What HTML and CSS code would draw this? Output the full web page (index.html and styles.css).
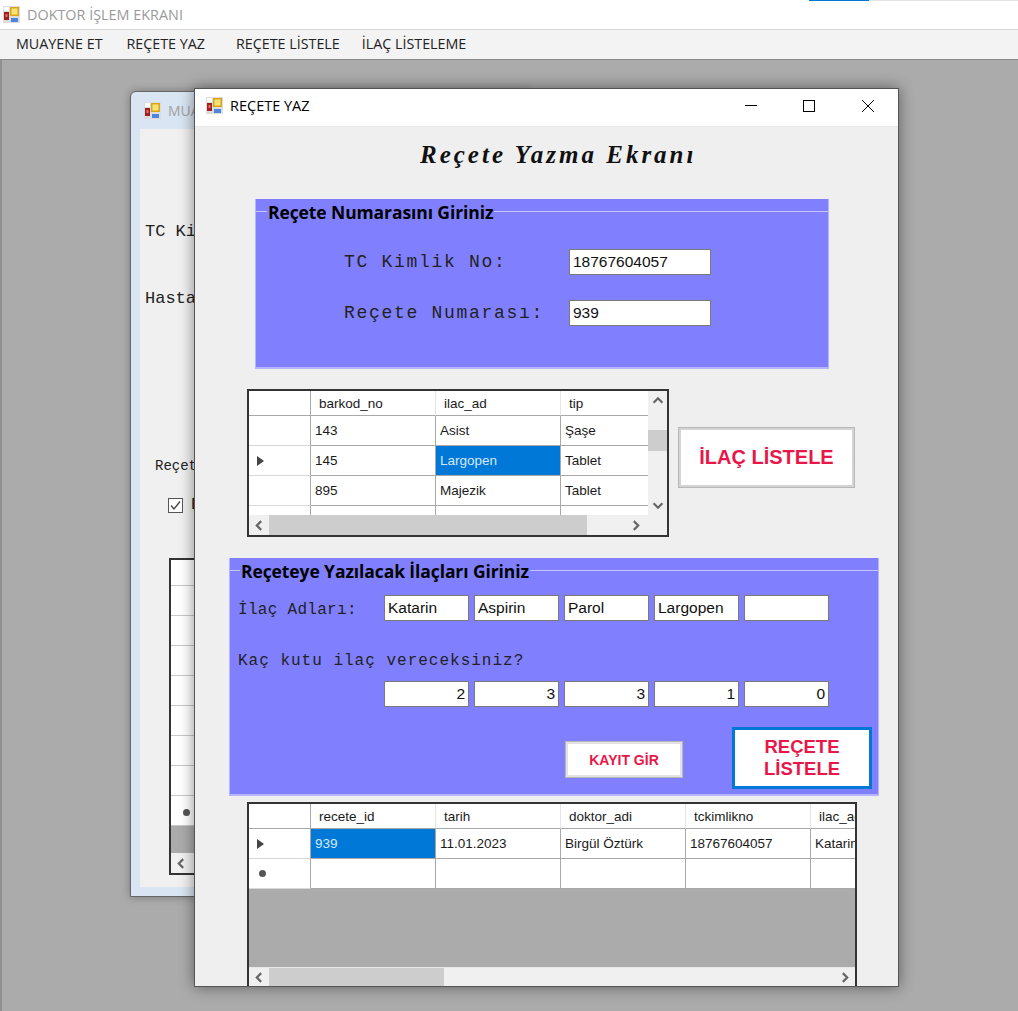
FILE: index.html
```html
<!DOCTYPE html>
<html lang="tr">
<head>
  <meta charset="UTF-8">
  <title>DOKTOR İŞLEM EKRANI</title>
  <link rel="stylesheet" href="styles.css">
</head>
<body>
  <svg class="defs" width="0" height="0">
    <symbol id="form-icon" viewBox="0 0 17 17">
      <rect x="0" y="0" width="17" height="17" fill="#dcdcdc"/>
      <rect x="1" y="1" width="5" height="4" fill="#fff"/>
      <rect x="1" y="6" width="5" height="8" fill="#9c2020"/>
      <rect x="2.5" y="8" width="2" height="3" fill="#f06a6a"/>
      <rect x="7" y="1" width="9" height="9" fill="#d9a514"/>
      <rect x="8.5" y="2.5" width="6" height="6" fill="#fbe27a"/>
      <rect x="8" y="12" width="7" height="4" fill="#4c86dc"/>
    </symbol>
    <symbol id="chev-left" viewBox="0 0 10 10"><path d="M7 1 L3 5 L7 9" fill="none" stroke="#666" stroke-width="2"/></symbol>
    <symbol id="chev-right" viewBox="0 0 10 10"><path d="M3 1 L7 5 L3 9" fill="none" stroke="#666" stroke-width="2"/></symbol>
    <symbol id="chev-up" viewBox="0 0 10 10"><path d="M1 7 L5 3 L9 7" fill="none" stroke="#666" stroke-width="2"/></symbol>
    <symbol id="chev-down" viewBox="0 0 10 10"><path d="M1 3 L5 7 L9 3" fill="none" stroke="#666" stroke-width="2"/></symbol>
  </svg>

  <!-- Ana pencere -->
  <header class="app-title">
    <svg class="form-icon"><use href="#form-icon"/></svg>
    <span>DOKTOR İŞLEM EKRANI</span>
    <div class="taskline"><i></i></div>
  </header>
  <nav class="menu">
    <a class="m1">MUAYENE ET</a>
    <a class="m2">REÇETE YAZ</a>
    <a class="m3">REÇETE LİSTELE</a>
    <a class="m4">İLAÇ LİSTELEME</a>
  </nav>

  <main class="mdi">
    <!-- Arkadaki muayene penceresi -->
    <section class="win win-back">
      <div class="back-title">
        <svg class="form-icon"><use href="#form-icon"/></svg>
        <span>MUA</span>
      </div>
      <div class="back-body">
        <p class="mono back-tc">TC Ki</p>
        <p class="mono back-hasta">Hasta</p>
        <p class="mono back-recete">Reçet</p>
        <div class="back-check">
          <svg class="checkbox" viewBox="0 0 15 15"><rect x="0.5" y="0.5" width="14" height="14" fill="#fff" stroke="#555"/><path d="M3 7.5 L6 11 L12 3.5" fill="none" stroke="#444" stroke-width="1.3"/></svg>
          <span class="mono">E</span>
        </div>
        <div class="back-grid">
          <div class="back-row back-head"></div>
          <div class="back-row"></div>
          <div class="back-row"></div>
          <div class="back-row"></div>
          <div class="back-row"></div>
          <div class="back-row"></div>
          <div class="back-row"></div>
          <div class="back-row"></div>
          <div class="back-row star-row"><span class="star"></span></div>
          <div class="back-empty"></div>
          <div class="back-scroll"><svg class="chev"><use href="#chev-left"/></svg></div>
        </div>
      </div>
    </section>

    <!-- Recete yazma penceresi -->
    <section class="win win-front">
      <div class="front-title">
        <svg class="form-icon"><use href="#form-icon"/></svg>
        <span class="front-name">REÇETE YAZ</span>
        <svg class="caption" viewBox="0 0 153 14">
          <path d="M0 6.5 H12" stroke="#000" fill="none"/>
          <rect x="58.5" y="1.5" width="11" height="11" stroke="#000" fill="none"/>
          <path d="M117 1 L129 13 M129 1 L117 13" stroke="#000" fill="none"/>
        </svg>
      </div>

      <div class="front-body">
        <h1 class="heading">Reçete Yazma Ekranı</h1>

        <fieldset class="group group-top">
          <legend>Reçete Numarasını Giriniz</legend>
          <div class="field field-tc">
            <label class="mono big">TC Kimlik No:</label>
            <div class="tb tb-wide">18767604057</div>
          </div>
          <div class="field">
            <label class="mono big">Reçete Numarası:</label>
            <div class="tb tb-wide">939</div>
          </div>
        </fieldset>

        <div class="grid-row">
          <div class="grid grid-ilac">
            <div class="grid-main">
              <div class="grid-clip">
                <table>
                  <thead>
                    <tr><th class="rh"></th><th>barkod_no</th><th>ilac_ad</th><th class="c-tip">tip</th></tr>
                  </thead>
                  <tbody>
                    <tr><td class="rh"></td><td>143</td><td>Asist</td><td>Şaşe</td></tr>
                    <tr><td class="rh"><span class="arrow"></span></td><td>145</td><td class="sel">Largopen</td><td>Tablet</td></tr>
                    <tr><td class="rh"></td><td>895</td><td>Majezik</td><td>Tablet</td></tr>
                    <tr><td class="rh"></td><td></td><td></td><td></td></tr>
                  </tbody>
                </table>
              </div>
              <div class="vscroll">
                <svg class="chev"><use href="#chev-up"/></svg>
                <div class="vtrack"><div class="vthumb"></div></div>
                <svg class="chev"><use href="#chev-down"/></svg>
              </div>
            </div>
            <div class="hscroll hscroll-ilac">
              <svg class="chev"><use href="#chev-left"/></svg>
              <div class="htrack"><div class="hthumb thumb-ilac"></div></div>
              <svg class="chev"><use href="#chev-right"/></svg>
            </div>
          </div>
          <button class="btn btn-ilac">İLAÇ LİSTELE</button>
        </div>

        <fieldset class="group group-ilac">
          <legend>Reçeteye Yazılacak İlaçları Giriniz</legend>
          <div class="names-row">
            <label class="mono mid">İlaç Adları:</label>
            <div class="tb-set">
              <div class="tb">Katarin</div>
              <div class="tb">Aspirin</div>
              <div class="tb">Parol</div>
              <div class="tb">Largopen</div>
              <div class="tb"></div>
            </div>
          </div>
          <p class="mono mid kac">Kaç kutu ilaç vereceksiniz?</p>
          <div class="tb-set tb-num">
            <div class="tb">2</div>
            <div class="tb">3</div>
            <div class="tb">3</div>
            <div class="tb">1</div>
            <div class="tb">0</div>
          </div>
          <div class="actions">
            <button class="btn btn-kayit">KAYIT GİR</button>
            <button class="btn btn-recete">REÇETE<br>LİSTELE</button>
          </div>
        </fieldset>

        <div class="grid grid-recete">
          <div class="grid-clip">
            <table>
              <thead>
                <tr><th class="rh"></th><th>recete_id</th><th>tarih</th><th>doktor_adi</th><th>tckimlikno</th><th>ilac_ad</th></tr>
              </thead>
              <tbody>
                <tr><td class="rh"><span class="arrow"></span></td><td class="sel">939</td><td>11.01.2023</td><td>Birgül Öztürk</td><td>18767604057</td><td>Katarin</td></tr>
                <tr><td class="rh"><span class="star"></span></td><td></td><td></td><td></td><td></td><td></td></tr>
              </tbody>
            </table>
          </div>
          <div class="hscroll">
            <svg class="chev"><use href="#chev-left"/></svg>
            <div class="htrack"><div class="hthumb thumb-recete"></div></div>
            <svg class="chev"><use href="#chev-right"/></svg>
          </div>
        </div>
      </div>
    </section>
  </main>
</body>
</html>
```

FILE: styles.css
```css
/* Genel */
html, body {
  margin: 0;
  height: 100%;
  overflow: hidden;
}

body {
  font-family: "Liberation Sans", Arial, sans-serif;
  background-color: #ababab;
  display: flex;
  flex-direction: column;
}

p, h1 {
  margin: 0;
}

.defs {
  position: absolute;
}

.form-icon {
  width: 17px;
  height: 17px;
  flex: none;
}

.mono {
  font-family: "Liberation Mono", "Courier New", monospace;
  color: #222;
}

/* Ust baslik ve menu */
.app-title {
  height: 29px;
  background-color: #fff;
  display: flex;
  align-items: center;
  gap: 7px;
  padding-left: 3px;
  font-family: "Open Sans", sans-serif;
  font-size: 14.4px;
  color: #9a9a9a;
  position: relative;
  flex: none;
}

.taskline {
  position: absolute;
  top: 0;
  left: 809px;
  right: 0;
  height: 1px;
  background-color: #e5e5e5;
}

.taskline i {
  display: block;
  width: 60px;
  height: 1px;
  background-color: #0078d7;
}

.menu {
  height: 31px;
  box-sizing: border-box;
  border-top: 1px solid #d8d8d8;
  border-bottom: 1px solid #8a8a8a;
  background-color: #f3f3f3;
  display: flex;
  align-items: center;
  padding-bottom: 2px;
  font-family: "Open Sans", sans-serif;
  font-size: 14.3px;
  color: #222;
  flex: none;
}

.m1 { margin-left: 16px; }
.m2 { margin-left: 24px; }
.m3 { margin-left: 31px; }
.m4 { margin-left: 22px; }

.mdi {
  flex: 1;
  position: relative;
  border-left: 2px solid #8f8f8f;
}

/* Pencereler */
.win {
  position: absolute;
  box-sizing: border-box;
  overflow: hidden;
}

.win-back {
  left: 128px;
  top: 31px;
  width: 400px;
  height: 806px;
  border: 1px solid #666;
  border-top-left-radius: 6px;
  background-color: #d9e5f2;
  padding: 0 0 9px 9px;
  display: flex;
  flex-direction: column;
  box-shadow: 0 0 8px rgba(0, 0, 0, 0.3);
}

.back-title {
  height: 37px;
  display: flex;
  align-items: center;
  gap: 7px;
  margin-left: 4px;
  font-family: "Open Sans", sans-serif;
  font-size: 14px;
  color: #a0a0a0;
  flex: none;
}

.back-body {
  flex: 1;
  background-color: #f0f0f0;
  padding-left: 5px;
}

.back-body .mono {
  font-size: 17px;
  line-height: 20px;
}

.back-tc { margin-top: 93px; }
.back-hasta { margin-top: 47px; }

.back-body .back-recete {
  margin-top: 147px;
  margin-left: 10px;
  font-size: 14px;
}

.back-check {
  display: flex;
  align-items: center;
  gap: 8px;
  margin: 21px 0 0 23px;
  height: 16px;
}

.checkbox {
  width: 15px;
  height: 15px;
}

.back-grid {
  margin: 45px 0 0 24px;
  width: 200px;
  height: 317px;
  box-sizing: border-box;
  border: 2px solid #333;
  display: flex;
  flex-direction: column;
}

.back-row {
  height: 30px;
  box-sizing: border-box;
  background-color: #fff;
  border-bottom: 1px solid #c8c8c8;
  position: relative;
  flex: none;
}

.back-head {
  height: 26px;
}

.star-row .star {
  position: absolute;
  left: 12px;
  top: 13px;
  margin-left: 0;
}

.back-empty {
  flex: 1;
  background-color: #ababab;
}

.back-scroll {
  height: 20px;
  background-color: #f0f0f0;
  display: flex;
  align-items: center;
  flex: none;
}

.win-front {
  left: 192px;
  top: 28px;
  width: 705px;
  height: 899px;
  border: 1px solid #555;
  background-color: #efefef;
  display: flex;
  flex-direction: column;
  box-shadow: 0 0 14px rgba(0, 0, 0, 0.45);
}

.front-title {
  height: 38px;
  box-sizing: border-box;
  background-color: #fff;
  border-bottom: 1px solid #e8e8e8;
  display: flex;
  align-items: center;
  padding: 0 0 4px 11px;
  flex: none;
}

.front-name {
  margin-left: 7px;
  font-family: "Open Sans", sans-serif;
  font-size: 14.5px;
  color: #000;
}

.caption {
  width: 153px;
  height: 14px;
  margin-left: 435px;
  margin-top: 1px;
}

.front-body {
  flex: 1;
  min-height: 0;
  display: flex;
  flex-direction: column;
}

.heading {
  height: 72px;
  box-sizing: border-box;
  padding: 14px 0 0 225px;
  font-family: "Liberation Serif", serif;
  font-style: italic;
  font-weight: bold;
  font-size: 25px;
  letter-spacing: 3px;
  color: #111;
  flex: none;
}

/* Grup kutulari */
.group {
  margin: 0;
  padding: 0;
  border: 0;
  box-sizing: border-box;
  background-color: #8080ff;
  border-left: 1px solid #b4b4ff;
  border-right: 1px solid #b4b4ff;
  border-bottom: 2px solid #b4b4ff;
  position: relative;
  flex: none;
}

.group legend {
  position: absolute;
  left: 11px;
  top: 1px;
  padding: 0 1px;
  font-family: "Open Sans", sans-serif;
  font-weight: 700;
  font-size: 17.5px;
  line-height: 24px;
  letter-spacing: -0.1px;
  color: #000;
  background-color: #8080ff;
  z-index: 1;
}

.group::before {
  content: "";
  display: block;
  height: 12px;
  border-bottom: 1px solid #c4c4ff;
}

.group-top {
  margin-left: 60px;
  width: 574px;
  height: 170px;
}

.group-ilac {
  margin: 21px 0 0 34px;
  width: 650px;
  height: 238px;
}

.group-ilac legend {
  left: 10px;
}

.field {
  display: flex;
  align-items: center;
  padding-left: 88px;
  margin-top: 25px;
}

.field-tc {
  margin-top: 37px;
}

.field label {
  width: 225px;
  flex: none;
}

.big {
  font-size: 18px;
  letter-spacing: 1.7px;
}

.mid {
  font-size: 16px;
  letter-spacing: 1px;
}

.tb {
  box-sizing: border-box;
  height: 26px;
  width: 85px;
  background-color: #fff;
  border: 1px solid #7a7a7a;
  font-size: 15.5px;
  line-height: 24px;
  padding: 0 3px;
  color: #111;
}

.tb-wide {
  width: 142px;
}

.names-row {
  display: flex;
  align-items: center;
  margin-top: 24px;
  padding-left: 8px;
}

.names-row label {
  width: 146px;
  padding-top: 3px;
  letter-spacing: 0.3px;
  flex: none;
}

.tb-set {
  display: flex;
  gap: 5px;
}

.kac {
  margin: 31px 0 0 8px;
  line-height: 18px;
}

.tb-num {
  margin: 11px 0 0 154px;
}

.tb-num .tb {
  text-align: right;
}

.actions {
  display: flex;
  align-items: flex-end;
  margin: 20px 0 0 335px;
}

/* Butonlar */
.btn {
  box-sizing: border-box;
  background-color: #fff;
  font-family: "Liberation Sans", Arial, sans-serif;
  font-weight: bold;
  color: #e8174a;
  padding: 0;
}

.btn-ilac {
  width: 177px;
  height: 61px;
  margin: 38px 0 0 9px;
  border: 1px solid #b8b8b8;
  box-shadow: inset 0 0 0 2px #d4d4d4;
  font-size: 20px;
}

.btn-kayit {
  width: 118px;
  height: 37px;
  margin-bottom: 11px;
  border: 1px solid #b8b8b8;
  box-shadow: inset 0 0 0 2px #e2e2e2;
  font-size: 14px;
}

.btn-recete {
  width: 140px;
  height: 62px;
  margin-left: 49px;
  border: 3px solid #0078d7;
  font-size: 18.5px;
  line-height: 22px;
}

/* Tablolar */
.grid-row {
  display: flex;
  align-items: flex-start;
  margin: 20px 0 0 52px;
  flex: none;
}

.grid {
  box-sizing: border-box;
  border: 2px solid #333;
  background-color: #ababab;
  display: flex;
  flex-direction: column;
}

.grid-ilac {
  width: 422px;
  height: 148px;
}

.grid-main {
  display: flex;
  height: 124px;
  flex: none;
}

.grid-clip {
  flex: 1;
  min-width: 0;
  overflow: hidden;
}

.grid-recete {
  margin: 6px 0 0 52px;
  width: 610px;
  flex: 1;
  min-height: 0;
  border-bottom: 0;
}

table {
  border-collapse: separate;
  border-spacing: 0;
  table-layout: fixed;
  width: 656px;
  background-color: #fff;
  font-size: 13.5px;
  color: #1a1a1a;
}

.grid-ilac table {
  width: 399px;
}

th {
  height: 25px;
  padding: 0 0 0 8px;
  box-sizing: border-box;
  width: 125px;
  font-weight: normal;
  text-align: left;
  background-color: #fff;
  border-right: 1px solid #e4e4e4;
  border-bottom: 1px solid #a8a8a8;
}

td {
  height: 30px;
  padding: 0 0 0 4px;
  box-sizing: border-box;
  white-space: nowrap;
  overflow: hidden;
  border-right: 1px solid #a8a8a8;
  border-bottom: 1px solid #a8a8a8;
}

th.rh, td.rh {
  width: 62px;
  padding: 0;
  border-right: 1px solid #a8a8a8;
  border-bottom: 1px solid #d8d8d8;
  position: relative;
}

th.rh {
  border-bottom-color: #a8a8a8;
}

th.c-tip {
  width: 87px;
  border-right: 0;
}

.grid-ilac td:last-child {
  border-right: 0;
}

td.sel {
  background-color: #0078d7;
  color: #d6e8f8;
}

.arrow {
  display: block;
  width: 0;
  height: 0;
  margin-left: 8px;
  border-left: 7px solid #444;
  border-top: 5px solid transparent;
  border-bottom: 5px solid transparent;
}

.star {
  display: block;
  width: 7px;
  height: 7px;
  margin-left: 10px;
  border-radius: 50%;
  background-color: #555;
}

/* Kaydirma cubuklari */
.hscroll {
  height: 20px;
  background-color: #f0f0f0;
  display: flex;
  align-items: center;
  flex: none;
}

.hscroll-ilac {
  padding-right: 21px;
}

.grid-recete .hscroll {
  height: 18px;
  border-top: 1px solid #e8e8e8;
}

.chev {
  width: 20px;
  height: 11px;
  flex: none;
}

.htrack {
  flex: 1;
  height: 100%;
}

.hthumb {
  height: 100%;
  background-color: #cdcdcd;
}

.thumb-ilac { width: 318px; }
.thumb-recete { width: 175px; }

.vscroll {
  width: 19px;
  background-color: #f0f0f0;
  display: flex;
  flex-direction: column;
  align-items: center;
  flex: none;
}

.vscroll .chev {
  margin: 4px 0;
}

.vtrack {
  flex: 1;
  width: 100%;
}

.vthumb {
  height: 21px;
  margin-top: 20px;
  background-color: #cdcdcd;
}
```
